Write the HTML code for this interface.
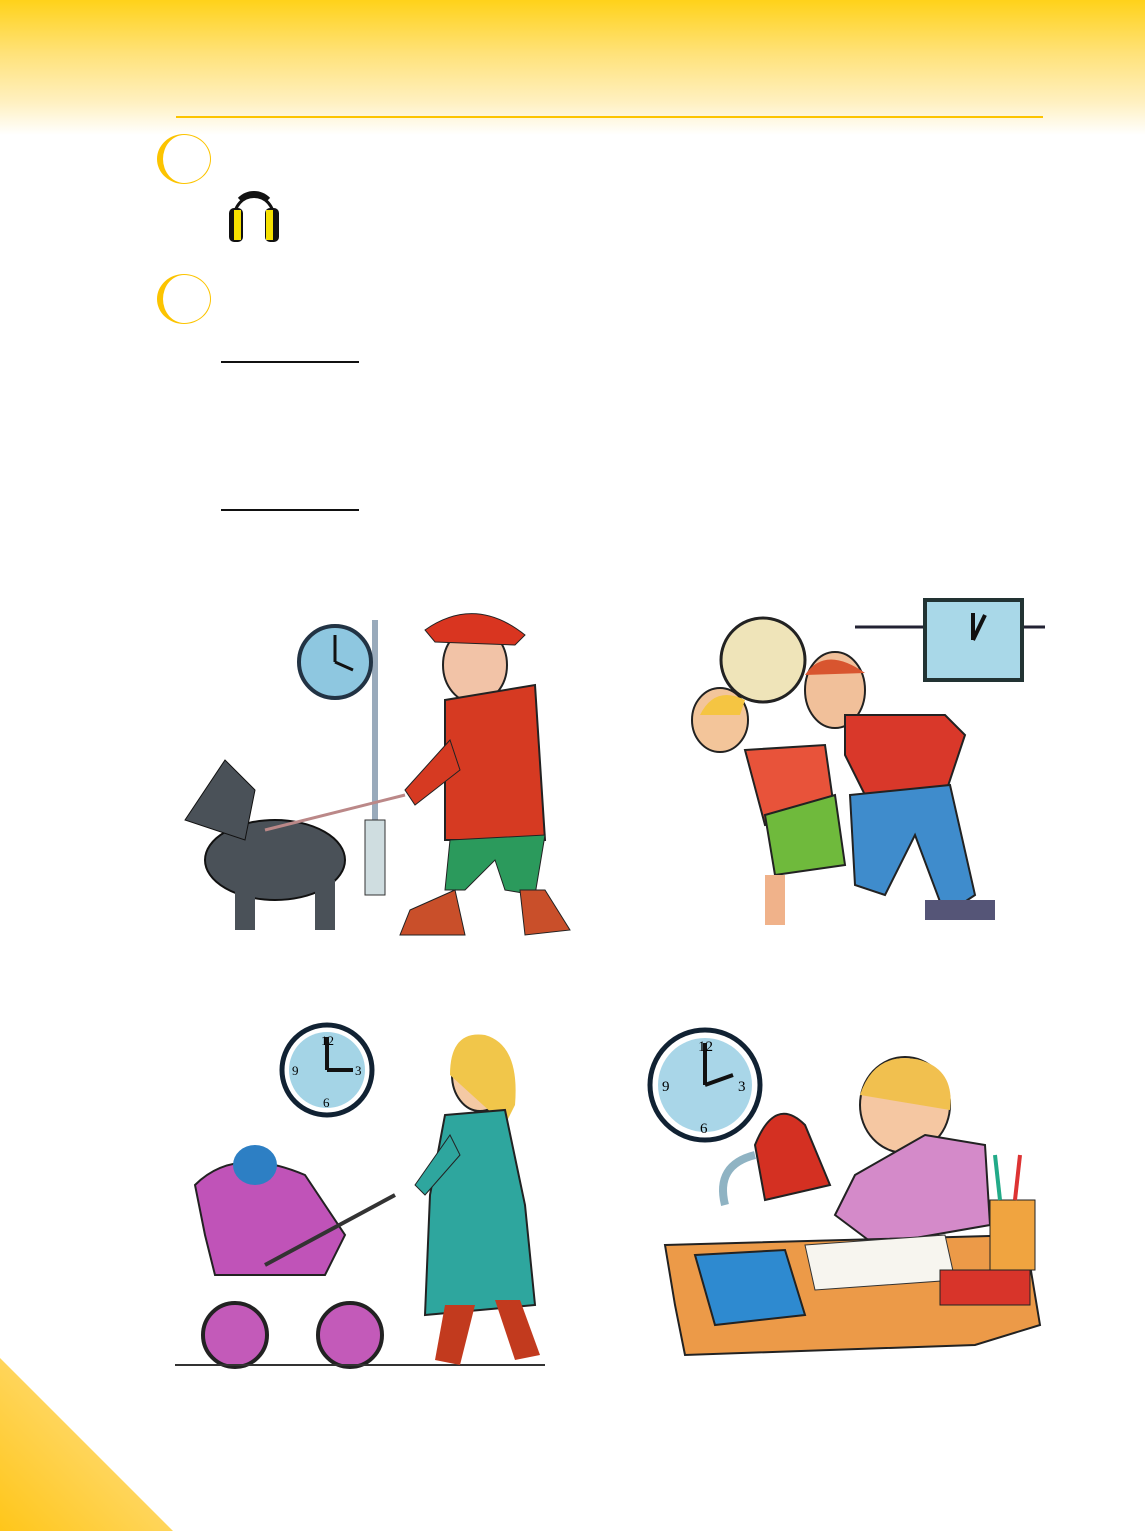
<!DOCTYPE html>
<html><head><meta charset="utf-8"><style>
html,body{margin:0;padding:0}
body{width:1145px;height:1531px;position:relative;overflow:hidden;background:#fff;font-family:"Liberation Sans",sans-serif}
.hdr{position:absolute;left:0;top:0;width:1145px;height:135px;background:linear-gradient(#ffd21a 0%,#ffe27a 40%,#fff0bf 75%,#fff 100%)}
.rule{position:absolute;left:176px;top:116px;width:867px;height:2px;background:#fcc400}
.circ{position:absolute;left:157px;width:54px;height:50px;border-radius:50%;border:1px solid #fcc400;border-left:6px solid #fcc400;background:#fff;box-sizing:border-box}
.ln{position:absolute;left:221px;width:138px;height:2px;background:#111}
.tri{position:absolute;left:0;top:1358px;width:173px;height:173px;background:linear-gradient(45deg,#ffc61a,#ffe49a);clip-path:polygon(0 0,100% 100%,0 100%)}
svg{position:absolute}
</style></head><body>
<div class="hdr"></div>
<div class="rule"></div>
<div class="circ" style="top:134px"></div>
<div class="circ" style="top:274px"></div>
<svg style="left:226px;top:188px" width="56" height="58" viewBox="0 0 56 58">
<path d="M8 34 C6 0 50 0 48 34" fill="none" stroke="#111" stroke-width="3"/>
<path d="M14 12 C22 4 34 4 42 12" fill="none" stroke="#111" stroke-width="6"/>
<rect x="3" y="20" width="14" height="34" rx="5" fill="#111"/><rect x="8" y="22" width="7" height="30" fill="#f5e000"/>
<rect x="39" y="20" width="14" height="34" rx="5" fill="#111"/><rect x="40" y="22" width="7" height="30" fill="#f5e000"/>
</svg>
<div class="ln" style="top:361px"></div>
<div class="ln" style="top:509px"></div>

<!-- picture 1 -->
<svg style="left:175px;top:590px" width="400" height="355">
<line x1="200" y1="30" x2="200" y2="300" stroke="#9ab" stroke-width="6"/>
<rect x="190" y="230" width="20" height="75" fill="#cfdde0" stroke="#333"/>
<circle cx="160" cy="72" r="36" fill="#8ec7e0" stroke="#234" stroke-width="4"/>
<line x1="160" y1="72" x2="160" y2="45" stroke="#111" stroke-width="3"/><line x1="160" y1="72" x2="178" y2="80" stroke="#111" stroke-width="3"/>
<ellipse cx="100" cy="270" rx="70" ry="40" fill="#4a5158" stroke="#111" stroke-width="2"/>
<path d="M10 230 L50 170 L80 200 L70 250Z" fill="#4a5158" stroke="#111"/>
<rect x="60" y="290" width="20" height="50" fill="#4a5158"/><rect x="140" y="290" width="20" height="50" fill="#4a5158"/>
<line x1="90" y1="240" x2="230" y2="205" stroke="#b88" stroke-width="3"/>
<ellipse cx="300" cy="75" rx="32" ry="38" fill="#f2c3a7" stroke="#222" stroke-width="2"/>
<path d="M250 40 Q300 5 350 45 L340 55 L260 52Z" fill="#d93520" stroke="#222"/>
<path d="M270 110 L360 95 L370 250 L270 250Z" fill="#d63a22" stroke="#222" stroke-width="2"/>
<path d="M230 200 L275 150 L285 180 L240 215Z" fill="#d63a22" stroke="#222"/>
<path d="M275 250 L370 245 L360 305 L330 300 L320 270 L290 300 L270 300Z" fill="#2b9a5c" stroke="#222"/>
<path d="M235 320 L280 300 L290 345 L225 345Z" fill="#c94f2a" stroke="#222"/>
<path d="M345 300 L370 300 L395 340 L350 345Z" fill="#c94f2a" stroke="#222"/>
</svg>

<!-- picture 2 -->
<svg style="left:685px;top:595px" width="360" height="355">
<line x1="170" y1="32" x2="360" y2="32" stroke="#223" stroke-width="3"/>
<rect x="240" y="5" width="97" height="80" fill="#a9d8e8" stroke="#233" stroke-width="4"/>
<line x1="288" y1="45" x2="288" y2="18" stroke="#111" stroke-width="4"/><line x1="288" y1="45" x2="300" y2="20" stroke="#111" stroke-width="4"/>
<circle cx="78" cy="65" r="42" fill="#efe4b9" stroke="#222" stroke-width="3"/>
<ellipse cx="35" cy="125" rx="28" ry="32" fill="#f3c59a" stroke="#222" stroke-width="2"/>
<path d="M15 120 Q30 90 60 105 L55 120Z" fill="#f5c542"/>
<path d="M60 155 L140 150 L150 220 L80 230Z" fill="#e8533a" stroke="#222" stroke-width="2"/>
<path d="M80 220 L150 200 L160 270 L90 280Z" fill="#6fba3c" stroke="#222" stroke-width="2"/>
<rect x="80" y="280" width="20" height="50" fill="#f0b28a"/>
<ellipse cx="150" cy="95" rx="30" ry="38" fill="#f1c09a" stroke="#222" stroke-width="2"/>
<path d="M120 80 Q140 50 180 78" fill="#d8552f"/>
<path d="M160 120 L260 120 L280 140 L260 200 L180 200 L160 160Z" fill="#d9382a" stroke="#222" stroke-width="2"/>
<path d="M165 200 L265 190 L290 300 L260 320 L230 240 L200 300 L170 290Z" fill="#3f8ccc" stroke="#222" stroke-width="2"/>
<rect x="240" y="305" width="70" height="20" fill="#557"/>
</svg>

<!-- picture 3 -->
<svg style="left:175px;top:1015px" width="380" height="355">
<circle cx="152" cy="55" r="45" fill="#fff" stroke="#123" stroke-width="5"/>
<circle cx="152" cy="55" r="38" fill="#a4d4e6"/>
<text x="146" y="30" font-size="13" font-family="Liberation Serif">12</text>
<text x="180" y="60" font-size="13" font-family="Liberation Serif">3</text>
<text x="148" y="92" font-size="13" font-family="Liberation Serif">6</text>
<text x="117" y="60" font-size="13" font-family="Liberation Serif">9</text>
<line x1="152" y1="55" x2="152" y2="22" stroke="#111" stroke-width="4"/><line x1="152" y1="55" x2="178" y2="55" stroke="#111" stroke-width="4"/>
<path d="M20 170 Q60 130 130 160 L170 220 L150 260 L40 260 L30 220Z" fill="#c053b8" stroke="#222" stroke-width="2"/>
<ellipse cx="80" cy="150" rx="22" ry="20" fill="#2d7fc4"/>
<circle cx="60" cy="320" r="32" fill="#c35ab9" stroke="#222" stroke-width="4"/>
<circle cx="175" cy="320" r="32" fill="#c35ab9" stroke="#222" stroke-width="4"/>
<line x1="90" y1="250" x2="220" y2="180" stroke="#333" stroke-width="4"/>
<line x1="0" y1="350" x2="370" y2="350" stroke="#333" stroke-width="2"/>
<ellipse cx="305" cy="60" rx="28" ry="36" fill="#f4c9a4" stroke="#222" stroke-width="2"/>
<path d="M275 60 Q275 15 310 20 Q345 30 340 90 L330 110 Z" fill="#f1c64a"/>
<path d="M270 100 L330 95 L350 190 L360 290 L250 300 L255 180Z" fill="#2ea69e" stroke="#222" stroke-width="2"/>
<path d="M240 170 L275 120 L285 140 L250 180Z" fill="#2ea69e" stroke="#222"/>
<path d="M270 290 L300 290 L285 350 L260 345Z" fill="#c23a1e"/>
<path d="M320 285 L345 285 L365 340 L340 345Z" fill="#c23a1e"/>
</svg>

<!-- picture 4 -->
<svg style="left:645px;top:1025px" width="400" height="335">
<circle cx="60" cy="60" r="55" fill="#fff" stroke="#123" stroke-width="5"/>
<circle cx="60" cy="60" r="47" fill="#a9d6e8"/>
<line x1="60" y1="60" x2="60" y2="18" stroke="#111" stroke-width="4"/><line x1="60" y1="60" x2="88" y2="50" stroke="#111" stroke-width="4"/>
<text x="53" y="26" font-size="15" font-family="Liberation Serif">12</text>
<text x="93" y="66" font-size="15" font-family="Liberation Serif">3</text>
<text x="55" y="108" font-size="15" font-family="Liberation Serif">6</text>
<text x="17" y="66" font-size="15" font-family="Liberation Serif">9</text>
<path d="M110 120 Q130 70 160 100 L185 160 L120 175Z" fill="#d43022" stroke="#222" stroke-width="2"/>
<path d="M80 180 Q70 140 110 130" fill="none" stroke="#8fb3c3" stroke-width="8"/>
<ellipse cx="260" cy="80" rx="45" ry="48" fill="#f5c7a2" stroke="#222" stroke-width="2"/>
<path d="M215 70 Q230 25 275 35 Q310 45 305 85 Z" fill="#f1c04f"/>
<path d="M280 110 L340 120 L345 200 L230 220 L190 190 L210 150Z" fill="#d48ac9" stroke="#222" stroke-width="2"/>
<path d="M20 220 L380 210 L395 300 L330 320 L40 330 L30 280Z" fill="#ec9a48" stroke="#222" stroke-width="2"/>
<path d="M50 230 L140 225 L160 290 L70 300Z" fill="#2e8ad0" stroke="#222" stroke-width="2"/>
<path d="M160 220 L300 210 L310 255 L170 265Z" fill="#f7f5ef" stroke="#333"/>
<rect x="295" y="245" width="90" height="35" fill="#d8342a" stroke="#222"/>
<rect x="345" y="175" width="45" height="70" fill="#f0a440" stroke="#222"/>
<line x1="355" y1="175" x2="350" y2="130" stroke="#2a8" stroke-width="4"/><line x1="370" y1="175" x2="375" y2="130" stroke="#d33" stroke-width="4"/>
</svg>

<div class="tri"></div>
</body></html>
